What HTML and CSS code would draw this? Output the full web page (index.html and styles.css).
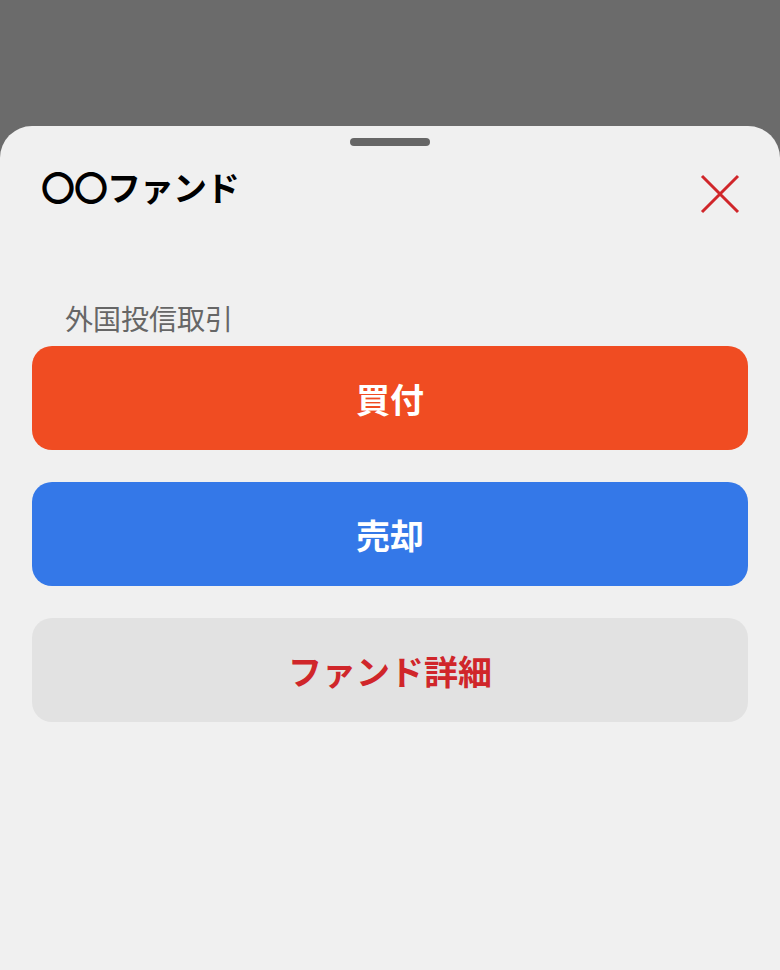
FILE: index.html
```html
<!DOCTYPE html>
<html>
	<head>
		<meta charset="utf-8" />
		<title>〇〇ファンド</title>
		<link rel="stylesheet" href="styles.css">
	</head>
	<body>
		<div class="backdrop"></div>
		<div class="sheet">
			<div class="handle"></div>
			<div class="sheet_head">
				<h1 class="title">〇〇ファンド</h1>
				<button class="close" aria-label="閉じる">
					<svg width="40" height="40" viewBox="0 0 40 40">
						<path d="M2 2 L38 38 M38 2 L2 38" stroke="#d0262a" stroke-width="3" fill="none"/>
					</svg>
				</button>
			</div>
			<p class="label">外国投信取引</p>
			<ul class="actions">
				<li><button class="btn buy">買付</button></li>
				<li><button class="btn sell">売却</button></li>
				<li><button class="btn detail">ファンド詳細</button></li>
			</ul>
		</div>
	</body>
</html>
```

FILE: styles.css
```css
*{
	margin:0;
	padding:0;
	list-style: none;
	box-sizing: border-box;
}
html,body{
	height: 100%;
}
body{
	background: #6b6b6b;
	font-family: "Noto Sans CJK JP", "Noto Sans", sans-serif;
	display: flex;
	flex-direction: column;
}
.backdrop{
	height: 126px;
	flex: none;
}
.sheet{
	flex: 1;
	background: #f0f0f0;
	border-radius: 32px 32px 0 0;
	padding: 12px 32px 0;
}
	.handle{
		width: 80px;
		height: 8px;
		margin: 0 auto;
		background: #666;
		border-radius: 4px;
	}
.sheet_head{
	display: flex;
	justify-content: space-between;
	align-items: center;
	padding: 14px 8px 0 9px;
}
	.title{
		font-size: 34px;
		font-weight: 700;
		color: #000;
		line-height: 48px;
		letter-spacing: -1px;
	}
	.close{
		border: none;
		background: none;
		width: 40px;
		height: 40px;
		margin-top: 14px;
	}
	.close svg{display: block;}
.label{
	margin-top: 84px;
	padding-left: 33px;
	font-size: 28px;
	line-height: 40px;
	color: #666;
}
.actions{
	margin-top: 8px;
	display: flex;
	flex-direction: column;
	gap: 32px;
}
	.btn{
		display: block;
		width: 100%;
		height: 104px;
		border: none;
		border-radius: 20px;
		font-family: inherit;
		font-size: 34px;
		font-weight: 700;
		color: #fff;
	}
	.buy{background: #f04c22;}
	.sell{background: #3478e8;}
	.detail{background: #e2e2e2;color: #d0262a;}
```
